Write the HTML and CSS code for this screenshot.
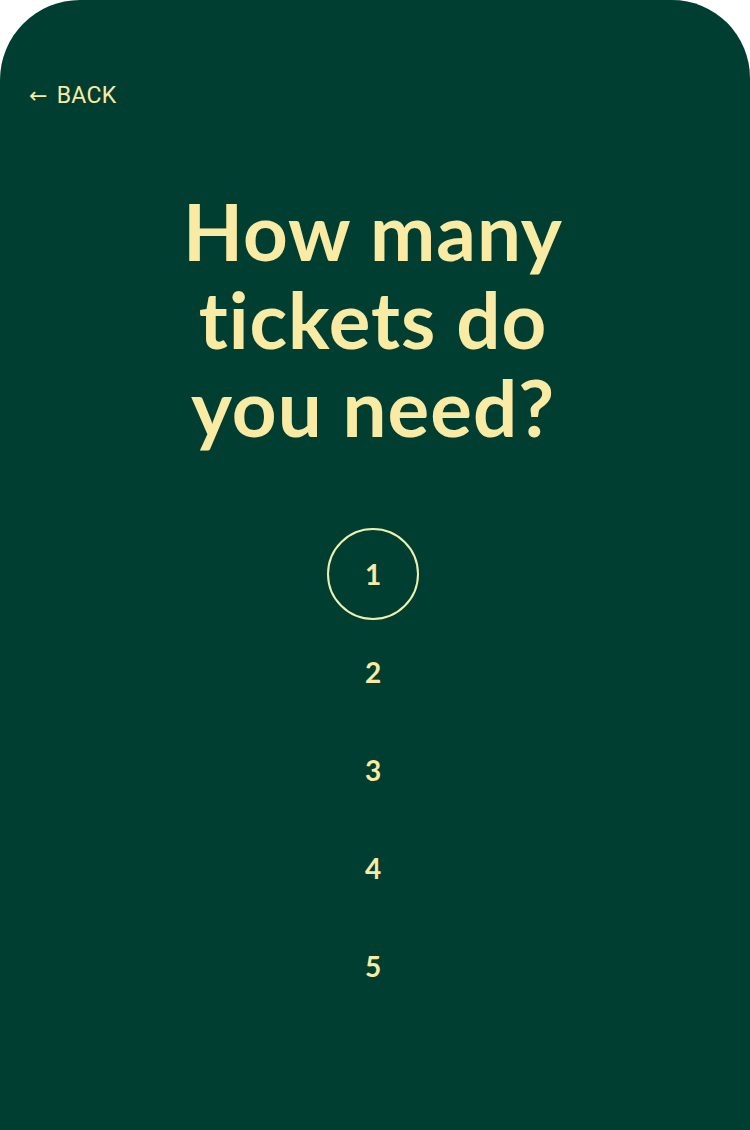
FILE: index.html
```html
<!DOCTYPE html>
<html>
<head>
<meta charset="utf-8">
<link rel="stylesheet" href="styles.css">
</head>
<body>
<div class="screen">
  <a class="back" href="#"><span class="arrow">←</span>BACK</a>
  <h1 class="title">How many<br>tickets do<br>you need?</h1>
  <ul class="options">
    <li class="option selected">1</li>
    <li class="option">2</li>
    <li class="option">3</li>
    <li class="option">4</li>
    <li class="option">5</li>
  </ul>
</div>
</body>
</html>
```
FILE: styles.css
```css
html, body {
  margin: 0;
  padding: 0;
  background: #ffffff;
}
.screen {
  width: 750px;
  height: 1130px;
  background: #003e31;
  border-radius: 80px 78px 0 0;
  box-sizing: border-box;
  padding-top: 83px;
  display: flex;
  flex-direction: column;
  align-items: center;
  color: #f9eaa4;
}
.back {
  align-self: flex-start;
  margin-left: 29px;
  display: flex;
  align-items: center;
  font-family: Roboto, "Liberation Sans", sans-serif;
  font-size: 23px;
  line-height: 26px;
  letter-spacing: 0.3px;
  color: #f9eaa4;
  text-decoration: none;
}
.arrow {
  font-family: "DejaVu Sans", sans-serif;
  font-size: 22px;
  margin-right: 9px;
}
.title {
  margin: 78px 0 0 -4px;
  font-family: Lato, "Noto Sans", sans-serif;
  font-weight: 700;
  font-size: 78px;
  line-height: 88px;
  text-align: center;
  letter-spacing: 1px;
  font-variant-ligatures: none;
  font-feature-settings: "liga" 0;
}
.options {
  list-style: none;
  margin: 77px 0 0 -4px;
  padding: 0;
  display: flex;
  flex-direction: column;
  align-items: center;
  gap: 6px;
}
.option {
  width: 92px;
  height: 92px;
  box-sizing: border-box;
  display: flex;
  align-items: center;
  justify-content: center;
  font-family: Lato, "Noto Sans", sans-serif;
  font-weight: 700;
  font-size: 28px;
  border-radius: 50%;
  border: 2px solid transparent;
}
.option.selected {
  border-color: #eef0b0;
}
```
